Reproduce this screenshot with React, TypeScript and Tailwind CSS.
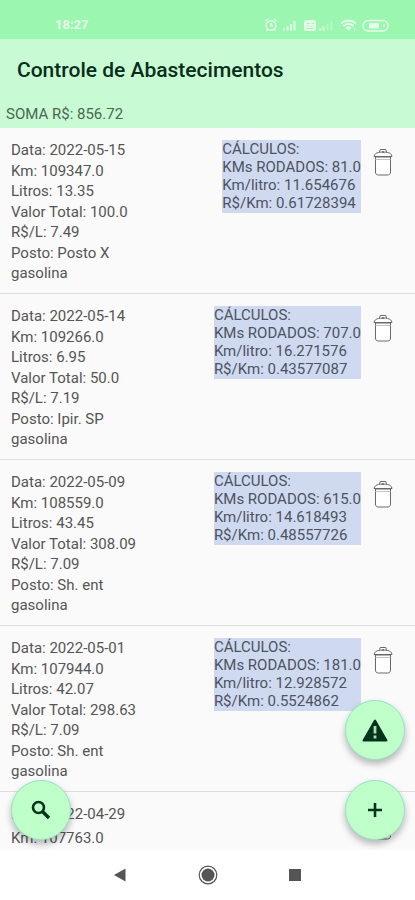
import React from "react";

type Refuel = {
  date: string;
  km: string;
  liters: string;
  total: string;
  price: string;
  station: string;
  fuel: string;
  driven?: string;
  kmPerLiter?: string;
  costPerKm?: string;
};

const refuels: Refuel[] = [
  { date: "2022-05-15", km: "109347.0", liters: "13.35", total: "100.0", price: "7.49", station: "Posto X", fuel: "gasolina", driven: "81.0", kmPerLiter: "11.654676", costPerKm: "0.61728394" },
  { date: "2022-05-14", km: "109266.0", liters: "6.95", total: "50.0", price: "7.19", station: "Ipir. SP", fuel: "gasolina", driven: "707.0", kmPerLiter: "16.271576", costPerKm: "0.43577087" },
  { date: "2022-05-09", km: "108559.0", liters: "43.45", total: "308.09", price: "7.09", station: "Sh. ent", fuel: "gasolina", driven: "615.0", kmPerLiter: "14.618493", costPerKm: "0.48557726" },
  { date: "2022-05-01", km: "107944.0", liters: "42.07", total: "298.63", price: "7.09", station: "Sh. ent", fuel: "gasolina", driven: "181.0", kmPerLiter: "12.928572", costPerKm: "0.5524862" },
];

function StatusBar() {
  return (
    <div className="flex h-[39px] shrink-0 items-center justify-between bg-[#9bf6b0] pt-[10px] pr-[25px] pl-[55px] text-[#e6fdea]">
      <span className="text-[13px] leading-4 font-bold">18:27</span>
      <svg width="126" height="16" viewBox="0 0 126 16" fill="none" stroke="currentColor" aria-hidden="true">
        <circle cx="7" cy="8.5" r="4.8" strokeWidth="1.4" />
        <path d="M1.5 4 4 2M12.500 4 10 2M7 6v3l2-.5M3.500 12.500 2.500 14M10.500 12.500l1 1.500" strokeWidth="1.3" />
        <path d="M20 13.500v-2M23.500 13.500v-4M27 13.500V7M30.500 13.500V4" strokeWidth="2" />
        <rect x="40" y="3" width="12" height="11" rx="2.500" fill="currentColor" stroke="none" />
        <path d="M42.500 6.500h3M47.500 6.500h2.500M42.500 9h2M46.500 9h3M43 11.500h6" stroke="#9bf6b0" strokeWidth="1" />
        <path d="M56 13.500v-2M59.500 13.500v-4" strokeWidth="2" />
        <path d="M63.500 13.500V7M67.500 13.500V4" strokeWidth="2" opacity=".35" />
        <path d="M77 6.500c4.500-4 10.500-4 15 0M79.500 9c3-2.600 7-2.600 10 0" strokeWidth="1.900" />
        <path d="m81.500 10.500 3 3.500 3-3.500c-2-1.300-4-1.300-6 0Z" fill="currentColor" stroke="none" />
        <path d="M90.500 11v3.500" strokeWidth="1.200" />
        <rect x="99" y="3.500" width="25" height="10.500" rx="5.200" strokeWidth="1.500" />
        <rect x="105" y="6" width="10" height="5.500" rx="1" fill="currentColor" stroke="none" />
        <path d="M120 7.500v2.500" strokeWidth="1.500" />
      </svg>
    </div>
  );
}

function TrashIcon() {
  return (
    <svg width="20" height="28" viewBox="0 0 20 28" fill="#fff" stroke="#686868" strokeWidth="1" strokeLinejoin="round" aria-hidden="true">
      <path d="M6.500 4.500 7.200 1.500h5.600l.7 3" />
      <path d="M8.500 4.500h3" />
      <path d="M1 8.500C1.500 6 3 5 5.500 4.500c3-.6 6-.6 9 0C17 5 18.500 6 19 8.500Z" />
      <path d="M2.500 9v15c0 2 1 3 3 3h9c2 0 3-1 3-3V9Z" />
      <path d="M2.500 11.500h15" stroke="#c4c4c4" />
      <circle cx="10" cy="4" r="1" fill="#686868" stroke="none" />
    </svg>
  );
}

function RefuelRow({ item }: { item: Refuel }) {
  return (
    <li className="flex h-[166px] shrink-0 items-start border-b border-[#dedede] pt-3 pr-[22px] pl-[11px]">
      <div className="flex h-[143px] flex-1 flex-col justify-between leading-5">
        <p>Data: {item.date}</p>
        <p>Km: {item.km}</p>
        <p>Litros: {item.liters}</p>
        <p>Valor Total: {item.total}</p>
        <p>R$/L: {item.price}</p>
        <p>Posto: {item.station}</p>
        <p>{item.fuel}</p>
      </div>
      {item.driven && (
        <div className="bg-[#cfdaf0] pb-px leading-[18px] text-[#4d5361]">
          <p>CÁLCULOS:</p>
          <p>KMs RODADOS: {item.driven}</p>
          <p>Km/litro: {item.kmPerLiter}</p>
          <p>R$/Km: {item.costPerKm}</p>
        </div>
      )}
      <button type="button" aria-label="Excluir" className="mt-2 ml-3">
        <TrashIcon />
      </button>
    </li>
  );
}

function Fab({ label, children }: { label: string; children: React.ReactNode }) {
  return (
    <button
      type="button"
      aria-label={label}
      className="flex size-[60px] items-center justify-center rounded-full border border-[#93e6c3] bg-[#bfffca] text-[#06331b] shadow-[0_4px_7px_rgba(0,0,0,0.28)]"
    >
      {children}
    </button>
  );
}

export default function App() {
  return (
    <div className="flex h-screen flex-col overflow-hidden bg-[#fafafa] font-[Roboto,sans-serif] text-[15px] text-[#555]">
      <StatusBar />
      <header className="h-[89px] shrink-0 bg-[#c8fbd4]">
        <h1 className="px-[17px] pt-[17px] text-[21px] leading-7 font-medium text-[#082d19]">Controle de Abastecimentos</h1>
        <p className="px-[6px] pt-5 leading-5 text-[#4b6653]">SOMA R$: 856.72</p>
      </header>
      <main className="relative min-h-0 flex-1">
        <ul className="flex h-full flex-col overflow-hidden">
          {refuels.map((item) => (
            <RefuelRow key={item.date} item={item} />
          ))}
          <RefuelRow item={{ date: "2022-04-29", km: "107763.0", liters: "14.2", total: "", price: "", station: "", fuel: "" }} />
        </ul>
        <div className="absolute bottom-[10px] left-[11px]">
          <Fab label="Pesquisar">
            <svg width="20" height="20" viewBox="0 0 20 20" fill="none" stroke="currentColor" aria-hidden="true">
              <circle cx="7.500" cy="7.500" r="5.500" strokeWidth="2.600" />
              <path d="m11.500 11.500 6.500 6.500" strokeWidth="3.400" />
            </svg>
          </Fab>
        </div>
        <div className="absolute right-[10px] bottom-[10px] flex flex-col gap-5">
          <Fab label="Alertas">
            <svg width="26" height="23" viewBox="0 0 26 23" aria-hidden="true">
              <path d="M13 1.500 24.500 21.500h-23Z" fill="currentColor" stroke="currentColor" strokeWidth="2" strokeLinejoin="round" />
              <path d="M13 7v7.500M13 16.500v3" stroke="#a9dfb5" strokeWidth="2.800" />
            </svg>
          </Fab>
          <Fab label="Adicionar">
            <svg width="14" height="14" viewBox="0 0 14 14" stroke="currentColor" strokeWidth="2.600" aria-hidden="true">
              <path d="M7 0v14M0 7h14" />
            </svg>
          </Fab>
        </div>
      </main>
      <nav className="flex h-[50px] shrink-0 items-center justify-center gap-[68px] bg-white text-[#555]">
        <button type="button" aria-label="Voltar">
          <svg width="20" height="20" viewBox="0 0 20 20" aria-hidden="true">
            <path d="M4 10 15.500 3.500v13Z" fill="currentColor" />
          </svg>
        </button>
        <button type="button" aria-label="Início">
          <svg width="20" height="20" viewBox="0 0 20 20" aria-hidden="true">
            <circle cx="10" cy="10" r="8.800" fill="none" stroke="currentColor" strokeWidth="1.200" />
            <circle cx="10" cy="10" r="6.500" fill="currentColor" />
          </svg>
        </button>
        <button type="button" aria-label="Recentes">
          <svg width="20" height="20" viewBox="0 0 20 20" aria-hidden="true">
            <rect x="3" y="4" width="12" height="12" fill="currentColor" />
          </svg>
        </button>
      </nav>
    </div>
  );
}
